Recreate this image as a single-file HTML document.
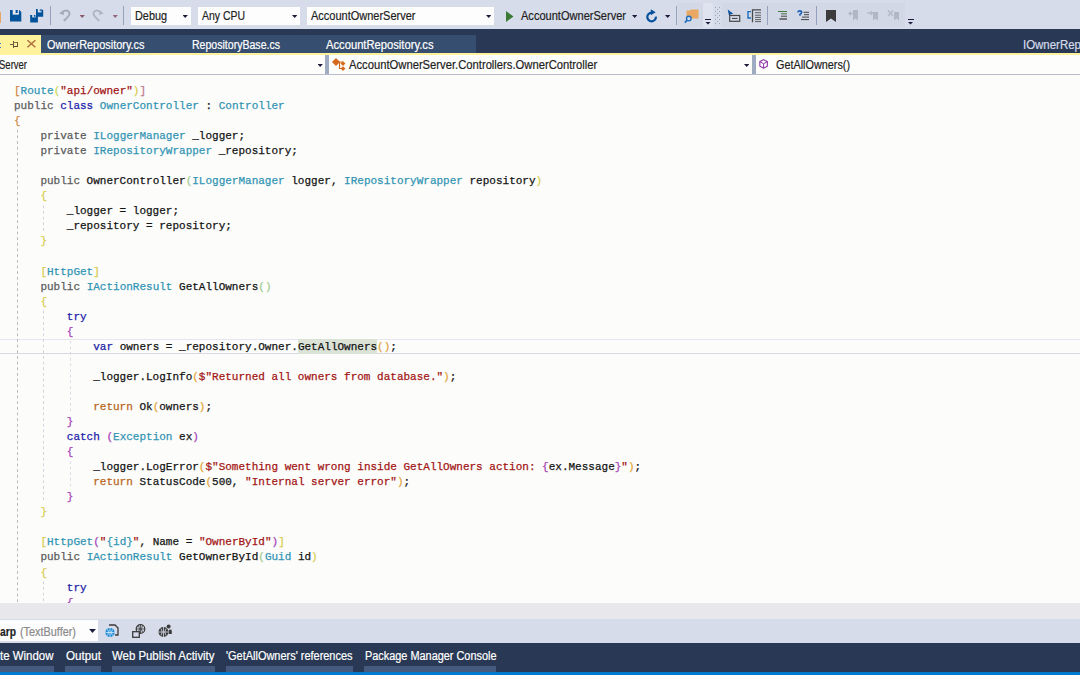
<!DOCTYPE html>
<html>
<head>
<meta charset="utf-8">
<title>OwnerController.cs - Microsoft Visual Studio</title>
<style>
html,body{margin:0;padding:0;}
body{width:1080px;height:675px;overflow:hidden;position:relative;background:#fcfdfb;font-family:"Liberation Sans",sans-serif;font-size:12px;color:#1e1e1e;}
.abs{position:absolute;}
svg{position:absolute;overflow:visible;}
.t{-webkit-text-stroke:0.2px;white-space:pre;line-height:14px;font-size:12px;transform-origin:0 0;}
#toolbar{left:0;top:0;width:1080px;height:29px;background:#d7dcea;}
#band{left:0;top:29px;width:1080px;height:24px;background:#293955;}
#tabs-bg{left:41px;top:35px;width:435px;height:18px;background:#364e6f;}
#tab-active{left:0;top:35px;width:41px;height:18px;background:#fff29d;}
#yline{left:0;top:53px;width:1080px;height:2px;background:#fff29d;}
#nav{left:0;top:55px;width:1080px;height:19px;background:#fdfdfb;}
#navline{left:0;top:74px;width:1080px;height:1px;background:#b9bccb;}
.navgap{top:55px;width:4px;height:19px;background:#9fabc0;}
.combo{background:#fdfdfd;height:18px;top:7px;}
.sep{width:1px;height:19px;top:6px;background:#95a1bd;}
.arr{width:5.4px;height:2.9px;background:#1b1b3c;clip-path:polygon(0 0,100% 0,50% 100%);}
#code{left:0;top:75px;width:1080px;height:528px;background:#fcfdfb;overflow:hidden;}
pre{margin:0;position:absolute;left:14px;top:9px;font-family:"Liberation Mono",monospace;font-size:11px;line-height:15.04px;color:#141414;-webkit-text-stroke:0.25px;}
.k{color:#5b5b5b}.b{color:#2121a8}.ty{color:#3294b4}.s{color:#a31515}.c{color:#b8651b}
.y{color:#d8cc4e}.p{color:#a640b8}.o{color:#e3a43a}.g{color:#a3cc8f}.br{color:#d08a48}.br2{color:#c07a90}.yg{color:#ccd860}
.guide{width:1px;background-image:linear-gradient(to bottom,var(--gc) 0,var(--gc) 2.8px,transparent 2.8px,transparent 100%);background-size:1px 5.66px;background-repeat:repeat-y;}
.g1{--gc:#b9b9bd}.g2{--gc:#d3d3de}.g3{--gc:#dcdce6}
#curline{left:0;top:264px;width:1080px;height:13px;border-top:1px solid #e6e6ee;border-bottom:1px solid #d8d8e4;}
.hl{background:#dbe3d6;padding:2px 0 1px;}
#hscroll{left:0;top:603px;width:1080px;height:16px;background:#e8e8ec;}
#btool{left:0;top:619px;width:1080px;height:24px;background:#d7dcea;}
#bcombo{left:0;top:620px;width:98px;height:21px;background:#fdfdfd;}
#bstrip{left:0;top:643px;width:1080px;height:29px;background:#293955;}
#status{left:0;top:672px;width:1080px;height:3px;background:#007acc;}
.ul{top:666px;height:6px;background:#465a7d;}

</style>
</head>
<body>
<div id="toolbar" class="abs"></div>
<div class="abs" style="left:678px;top:3px;width:34px;height:24px;background:#d2d8e6"></div>
<div class="abs" style="left:703px;top:3px;width:10px;height:24px;background:#dee3ef"></div>
<div class="abs" style="left:722px;top:3px;width:183px;height:24px;background:#d2d8e6"></div>
<!-- left icons -->
<div class="abs" style="left:-2.3px;top:12px;width:1.5px;height:9px;background:#f6e3cc;border:1px solid #e8a565"></div>
<svg style="left:10.3px;top:10px" width="12" height="12" viewBox="0 0 12 12"><path d="M0 0H9.3L11.3 2V11.5H0Z" fill="#00529b"/><rect x="2.7" y="0" width="6.2" height="4.6" fill="#e4e8f1"/><rect x="5.6" y="0" width="2.1" height="3" fill="#00529b"/></svg>
<svg style="left:30px;top:9px" width="14" height="14" viewBox="0 0 14 14"><path d="M6 0H11.8L13.2 1.4V7.7H6Z" fill="#00529b"/><rect x="7.8" y="0" width="3.6" height="3.4" fill="#dfe4ef"/><rect x="9.7" y="0.3" width="1.5" height="1.9" fill="#2a6aae"/><path d="M0.2 6H6.6L7.9 7.3V13.6H0.2Z" fill="#00529b"/><rect x="2.2" y="6" width="3.4" height="2.4" fill="#dfe4ef"/><rect x="3.9" y="6" width="1.2" height="1.7" fill="#00529b"/></svg>
<div class="abs sep" style="left:50px"></div>
<svg style="left:59px;top:9px" width="12" height="13" viewBox="0 0 12 13"><path d="M2.5 4Q6.5 -0.3 9.8 2.6Q11.6 5 8.8 7.8L4.8 12" fill="none" stroke="#a4aaba" stroke-width="1.9"/><path d="M0.2 4.6L4.2 1.2L5.2 6Z" fill="#a4aaba"/></svg>
<div class="abs arr" style="left:79.5px;top:15px;background:#8a5a6c"></div>
<svg style="left:92px;top:9px" width="12" height="13" viewBox="0 0 12 13"><path d="M9.5 4Q5.5 -0.3 2.2 2.6Q0.4 5 3.2 7.8L7.2 12" fill="none" stroke="#b0b6c4" stroke-width="1.9"/><path d="M11.8 4.6L7.8 1.2L6.8 6Z" fill="#b0b6c4"/></svg>
<div class="abs arr" style="left:112.5px;top:15px;background:#93677a"></div>
<div class="abs sep" style="left:123px"></div>
<!-- combos -->
<div class="abs combo" style="left:131px;width:60px"></div><div class="abs arr" style="left:182.5px;top:15px"></div>
<div class="abs combo" style="left:198px;width:102px"></div><div class="abs arr" style="left:292px;top:15px"></div>
<div class="abs combo" style="left:307px;width:187px"></div><div class="abs arr" style="left:486px;top:15px"></div>
<!-- run -->
<svg style="left:505.5px;top:10.5px" width="8" height="11" viewBox="0 0 8 11"><path d="M0 0L7.5 5.5L0 11Z" fill="#3a7a35"/></svg>
<div class="abs arr" style="left:632px;top:15px"></div>
<svg style="left:646px;top:9px" width="12" height="14" viewBox="0 0 12 14"><path d="M5.6 3.7A4.3 4.3 0 1 0 9.9 7.7" fill="none" stroke="#05509c" stroke-width="2.2"/><path d="M4.8 0.3L9.7 3.3L4.8 6.2Z" fill="#05509c"/></svg>
<div class="abs arr" style="left:665px;top:15px"></div>
<div class="abs sep" style="left:676px"></div>
<!-- find in files -->
<svg style="left:684px;top:9px" width="15" height="14" viewBox="0 0 15 14"><path d="M2.5 1.5H6L7 0.5H14.5V9.5H2.5Z" fill="#e9a762"/><circle cx="4.8" cy="9.6" r="2.3" fill="#d7dcea" stroke="#1e6fc0" stroke-width="1.4"/><path d="M3.2 11.2L0.8 13.6" stroke="#1e6fc0" stroke-width="1.8"/></svg>
<div class="abs" style="left:705px;top:19px;width:6px;height:1px;background:#1b1b3c"></div>
<div class="abs arr" style="left:705px;top:21.5px;width:6px;height:3px"></div>
<svg style="left:715px;top:7px" width="6" height="17" viewBox="0 0 6 17"><g fill="#9aa3b8"><rect x="0" y="0" width="1" height="1"/><rect x="4" y="0" width="1" height="1"/><rect x="2" y="2" width="1" height="1"/><rect x="0" y="4" width="1" height="1"/><rect x="4" y="4" width="1" height="1"/><rect x="2" y="6" width="1" height="1"/><rect x="0" y="8" width="1" height="1"/><rect x="4" y="8" width="1" height="1"/><rect x="2" y="10" width="1" height="1"/><rect x="0" y="12" width="1" height="1"/><rect x="4" y="12" width="1" height="1"/><rect x="2" y="14" width="1" height="1"/><rect x="0" y="16" width="1" height="1"/><rect x="4" y="16" width="1" height="1"/></g></svg>
<svg style="left:727px;top:9px" width="14" height="13" viewBox="0 0 14 13"><path d="M0.7 0.5L6.2 4.8L3.6 5.2L2.2 7.6Z" fill="#0a4f9e"/><rect x="2.7" y="6.5" width="10" height="5.8" fill="#d7dcea" stroke="#474747" stroke-width="1.2"/><rect x="5" y="8.9" width="5.6" height="1.1" fill="#474747"/></svg>
<svg style="left:747px;top:9px" width="15" height="14" viewBox="0 0 15 14"><path d="M4 2.6H1V9H4" fill="none" stroke="#1e6fc0" stroke-width="1.4"/><path d="M5.5 13.3V0.8H14" fill="none" stroke="#4a4a4a" stroke-width="1.3"/><path d="M8 3.7H14M8 6.2H14M8 8.4H14M8 10.6H14M8 12.6H14" stroke="#505050" stroke-width="0.9"/></svg>
<div class="abs sep" style="left:767px"></div>
<svg style="left:777px;top:10px" width="11" height="11" viewBox="0 0 11 11"><path d="M1 1.5H10" stroke="#3f7f3a" stroke-width="1"/><path d="M4 3.8H10" stroke="#4b6b48" stroke-width="1"/><path d="M4 6.2H10" stroke="#444" stroke-width="1"/><path d="M2.5 9H10" stroke="#333" stroke-width="1.2"/></svg>
<svg style="left:797px;top:10px" width="13" height="11" viewBox="0 0 13 11"><path d="M0.8 2.4Q1 0.9 2.8 0.9Q4.6 0.9 4.6 2.5Q4.6 3.8 3 4.3V5.8" fill="none" stroke="#1e5fb8" stroke-width="1.6"/><path d="M6.5 2.3H12M7 4.7H12M5 7.1H12M4 9.6H12" stroke="#444" stroke-width="1"/></svg>
<div class="abs sep" style="left:816px"></div>
<svg style="left:826px;top:9.5px" width="10" height="12" viewBox="0 0 10 12"><path d="M0 0H10V12L5 8.5L0 12Z" fill="#3b3b3b"/></svg>
<svg style="left:848px;top:10px" width="11" height="11" viewBox="0 0 11 11"><path d="M5 0H10V10.5L7.5 8.5L5 10.5Z" fill="#b1b7c4"/><path d="M0 3.5L3 1V6Z" fill="#b1b7c4"/><path d="M2 3.5H5.5" stroke="#b1b7c4" stroke-width="1.3"/></svg>
<svg style="left:867px;top:10px" width="12" height="11" viewBox="0 0 12 11"><path d="M6 2H11V10.5L8.5 8.5L6 10.5Z" fill="#b1b7c4"/><path d="M6.5 3L3.5 0.5V5.5Z" fill="#b1b7c4"/><path d="M0 3H4" stroke="#b1b7c4" stroke-width="1.3"/></svg>
<svg style="left:888px;top:10px" width="12" height="11" viewBox="0 0 12 11"><path d="M6 2H11V10.5L8.5 8.5L6 10.5Z" fill="#b1b7c4"/><path d="M0 0.5L5 6M5 0.5L0 6" stroke="#b1b7c4" stroke-width="1.3"/></svg>
<div class="abs" style="left:907.5px;top:19px;width:6px;height:1px;background:#1b1b3c"></div>
<div class="abs arr" style="left:907.5px;top:21.5px;width:6px;height:3px"></div>
<!-- tab band -->
<div id="band" class="abs"></div>
<div id="tabs-bg" class="abs"></div>
<div id="tab-active" class="abs"></div>
<div class="abs" style="left:0;top:43px;width:1px;height:1.4px;background:#2f7fd0"></div>
<div class="abs" style="left:0;top:46.8px;width:1px;height:1.4px;background:#2f7fd0"></div>
<svg style="left:10px;top:41px" width="9" height="8" viewBox="0 0 9 8" shape-rendering="crispEdges"><rect x="0" y="3" width="3" height="1" fill="#6b5b3c"/><rect x="3" y="0" width="1" height="7" fill="#6b5b3c"/><rect x="4" y="1" width="4" height="1" fill="#8a7a50"/><rect x="7" y="1" width="1" height="5" fill="#6b5b3c"/><rect x="4" y="5" width="4" height="1.2" fill="#5a4a30"/></svg>
<svg style="left:27.4px;top:40.3px" width="9" height="8" viewBox="0 0 9 8"><path d="M0.4 0.3L8.4 7.2M8.4 0.3L0.4 7.2" stroke="#ad6a3c" stroke-width="1.4"/></svg>
<div id="yline" class="abs"></div>
<!-- nav bar -->
<div id="nav" class="abs"></div>
<div id="navline" class="abs"></div>
<div class="abs navgap" style="left:325px"></div>
<div class="abs navgap" style="left:752px"></div>
<div class="abs arr" style="left:317.5px;top:64px"></div>
<div class="abs arr" style="left:744px;top:64px"></div>
<svg style="left:332px;top:57.5px" width="14" height="13" viewBox="0 0 14 13"><path d="M4 0L8 4L4 8L0 4Z" fill="#d46a1f"/><path d="M5 4H11M7.5 4V10.5H10" fill="none" stroke="#d46a1f" stroke-width="1.2"/><path d="M11 3.2L13.4 5.6L11 8L8.6 5.6Z" fill="#d46a1f"/><path d="M11 8.2L13.4 10.6L11 13L8.6 10.6Z" fill="#d46a1f"/></svg>
<svg style="left:758.8px;top:59px" width="9.2" height="9.8" viewBox="0 0 10 11"><path d="M5 0.7L9.2 3V8L5 10.3L0.8 8V3Z" fill="#fff" stroke="#8b2fa3" stroke-width="1.2"/><path d="M0.8 3L5 5.3L9.2 3M5 5.3V10.3" fill="none" stroke="#8b2fa3" stroke-width="1.1"/></svg>
<!-- bottom -->
<div id="hscroll" class="abs"></div>
<div id="btool" class="abs"></div>
<div id="bcombo" class="abs"></div>
<div class="abs arr" style="left:89.1px;top:629.1px;width:6.8px;height:3.9px"></div>
<svg style="left:105px;top:624px" width="15" height="14" viewBox="0 0 15 14"><path d="M4 1H10L13 4V11H10" fill="none" stroke="#3b3b3b" stroke-width="1.3"/><circle cx="5" cy="8.5" r="4.6" fill="#1b8ad6"/><path d="M0.6 8.5H9.4M5 4V13M2.5 5.5Q5 8.5 2.5 11.5M7.5 5.5Q5 8.5 7.5 11.5" fill="none" stroke="#d8ecfb" stroke-width="0.8"/></svg>
<svg style="left:132px;top:624px" width="14" height="14" viewBox="0 0 14 14"><circle cx="8.5" cy="5" r="4.3" fill="none" stroke="#3b3b3b" stroke-width="1.2"/><path d="M4.2 5H12.8M8.5 0.7V9.3M6.5 1.5Q8.5 5 6.5 8.5M10.5 1.5Q8.5 5 10.5 8.5" fill="none" stroke="#3b3b3b" stroke-width="0.8"/><rect x="0.7" y="7.7" width="6.6" height="5.6" fill="#d7dcea" stroke="#3b3b3b" stroke-width="1.3"/></svg>
<svg style="left:158px;top:624px" width="15" height="14" viewBox="0 0 15 14"><circle cx="5.5" cy="8" r="5" fill="#3b3b3b"/><path d="M0.5 8H10.5M5.5 3V13M3 4.5Q5.5 8 3 11.5M8 4.5Q5.5 8 8 11.5" fill="none" stroke="#d7dcea" stroke-width="0.8"/><circle cx="10.6" cy="2.6" r="2" fill="#3b3b3b"/><path d="M10.8 10V7Q10.8 5.6 12.3 5.6Q13.8 5.6 13.8 7V10Z" fill="#3b3b3b"/></svg>
<div id="bstrip" class="abs"></div>
<div class="abs ul" style="left:0;width:54px"></div>
<div class="abs ul" style="left:65px;width:36px"></div>
<div class="abs ul" style="left:112px;width:103px"></div>
<div class="abs ul" style="left:226px;width:127px"></div>
<div class="abs ul" style="left:364px;width:132px"></div>
<div id="status" class="abs"></div>

<div id="code" class="abs">
<div id="curline" class="abs"></div>
<div class="abs guide g1" style="left:17px;top:54px;height:474px;background-position:0 0.78px"></div>
<div class="abs guide g2" style="left:43px;top:130px;height:26px;background-position:0 0.38px"></div>
<div class="abs guide g2" style="left:43px;top:235px;height:192px;background-position:0 0.66px"></div>
<div class="abs guide g2" style="left:43px;top:506px;height:22px;background-position:0 0.38px"></div>
<div class="abs guide g3" style="left:70px;top:265px;height:71px;background-position:0 0.74px"></div>
<div class="abs guide g3" style="left:70px;top:386px;height:26px;background-position:0 0.06px"></div>
<pre id="src"><span class="br">[</span><span class="ty">Route</span><span class="yg">(</span><span class="s">"api/owner"</span><span class="y">)</span><span class="br2">]</span>
<span class="k">public</span> <span class="b">class</span> <span class="ty">OwnerController</span> : <span class="ty">Controller</span>
<span class="br">{</span>
    <span class="k">private</span> <span class="ty">ILoggerManager</span> _logger;
    <span class="k">private</span> <span class="ty">IRepositoryWrapper</span> _repository;

    <span class="k">public</span> OwnerController<span class="g">(</span><span class="ty">ILoggerManager</span> logger, <span class="ty">IRepositoryWrapper</span> repository<span class="y">)</span>
    <span class="y">{</span>
        _logger = logger;
        _repository = repository;
    <span class="y">}</span>

    <span class="y">[</span><span class="ty">HttpGet</span><span class="y">]</span>
    <span class="k">public</span> <span class="ty">IActionResult</span> GetAllOwners<span class="g">()</span>
    <span class="y">{</span>
        <span class="b">try</span>
        <span class="p">{</span>
            <span class="b">var</span> owners = _repository.Owner.<span class="hl">GetAllOwners</span><span class="o">()</span>;

            _logger.LogInfo<span class="o">(</span><span class="s">$"Returned all owners from database."</span><span class="o">)</span>;

            <span class="c">return</span> Ok<span class="o">(</span>owners<span class="o">)</span>;
        <span class="p">}</span>
        <span class="b">catch</span> <span class="p">(</span><span class="ty">Exception</span> ex<span class="p">)</span>
        <span class="p">{</span>
            _logger.LogError<span class="o">(</span><span class="s">$"Something went wrong inside GetAllOwners action: </span><span class="p">{</span>ex.Message<span class="p">}</span><span class="s">"</span><span class="o">)</span>;
            <span class="c">return</span> StatusCode<span class="o">(</span>500, <span class="s">"Internal server error"</span><span class="o">)</span>;
        <span class="p">}</span>
    <span class="y">}</span>

    <span class="y">[</span><span class="ty">HttpGet</span><span class="p">(</span><span class="s">"</span><span class="ty">{id}</span><span class="s">"</span>, Name = <span class="s">"OwnerById"</span><span class="p">)</span><span class="y">]</span>
    <span class="k">public</span> <span class="ty">IActionResult</span> GetOwnerById<span class="g">(</span><span class="ty">Guid</span> id<span class="y">)</span>
    <span class="y">{</span>
        <span class="b">try</span>
        <span class="p">{</span></pre>
</div>
<span class="t abs" style="left:135.0px;top:8.59px;color:#1e1e1e;transform:scaleX(0.9046)">Debug</span>
<span class="t abs" style="left:202.0px;top:8.59px;color:#1e1e1e;transform:scaleX(0.8712)">Any CPU</span>
<span class="t abs" style="left:310.5px;top:8.59px;color:#1e1e1e;transform:scaleX(0.9163)">AccountOwnerServer</span>
<span class="t abs" style="left:521.0px;top:8.59px;color:#1e1e1e;transform:scaleX(0.9207)">AccountOwnerServer</span>
<span class="t abs" style="left:47.0px;top:37.59px;color:#ffffff;transform:scaleX(0.9099)">OwnerRepository.cs</span>
<span class="t abs" style="left:192.0px;top:37.59px;color:#ffffff;transform:scaleX(0.8796)">RepositoryBase.cs</span>
<span class="t abs" style="left:326.0px;top:37.59px;color:#ffffff;transform:scaleX(0.9334)">AccountRepository.cs</span>
<span class="t abs" style="left:1022.5px;top:37.59px;color:#d5dbe8;transform:scaleX(0.9549)">IOwnerRepository.cs</span>
<span class="t abs" style="left:-1.0px;top:57.84px;color:#1e1e1e;transform:scaleX(0.7922)">Server</span>
<span class="t abs" style="left:348.7px;top:57.84px;color:#1e1e1e;transform:scaleX(0.9354)">AccountOwnerServer.Controllers.OwnerController</span>
<span class="t abs" style="left:775.5px;top:57.84px;color:#1e1e1e;transform:scaleX(0.9023)">GetAllOwners()</span>
<span class="t abs" style="left:-0.5px;top:625.04px;color:#1e1e1e;font-weight:bold;transform:scaleX(0.8562)">arp</span>
<span class="t abs" style="left:20.0px;top:625.04px;color:#8a8a8a;transform:scaleX(0.9060)">(TextBuffer)</span>
<span class="t abs" style="left:-0.5px;top:649.14px;color:#ffffff;transform:scaleX(0.9548)">te Window</span>
<span class="t abs" style="left:65.5px;top:649.14px;color:#ffffff;transform:scaleX(0.9714)">Output</span>
<span class="t abs" style="left:112.0px;top:649.14px;color:#ffffff;transform:scaleX(0.9506)">Web Publish Activity</span>
<span class="t abs" style="left:226.0px;top:649.14px;color:#ffffff;transform:scaleX(0.9124)">&#39;GetAllOwners&#39; references</span>
<span class="t abs" style="left:364.5px;top:649.14px;color:#ffffff;transform:scaleX(0.9084)">Package Manager Console</span>
</body>
</html>
